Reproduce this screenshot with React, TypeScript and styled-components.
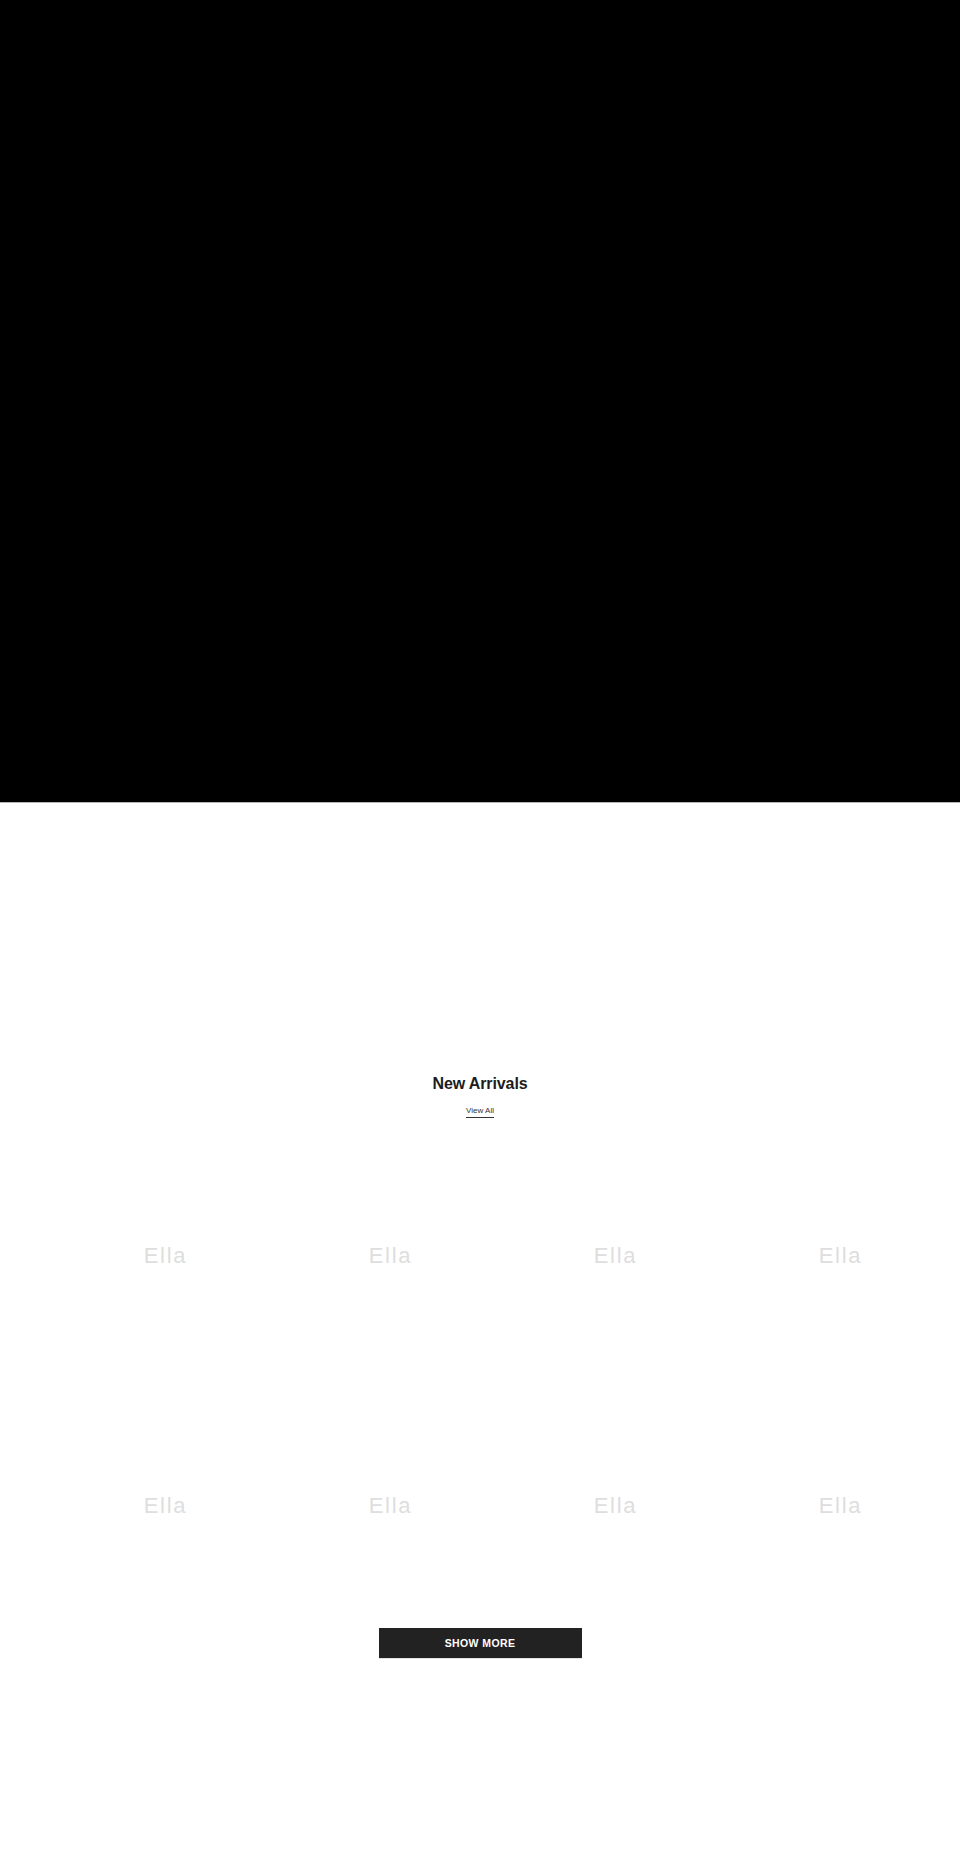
import React from 'react'
import styled, { createGlobalStyle } from 'styled-components'

const GlobalStyle = createGlobalStyle`
  html, body {
    margin: 0;
    padding: 0;
    background: #fff;
  }
  body {
    font-family: "Liberation Sans", Arial, Helvetica, sans-serif;
    color: #1a1a1a;
  }
  * {
    box-sizing: border-box;
  }
`

const products = Array.from({ length: 8 }, (_, i) => ({ id: i, brand: 'Ella' }))

const App = () => {
  return (
    <>
      <GlobalStyle />
      <Page>
        <Hero />
        <Collection>
          <Heading>
            <Title>New Arrivals</Title>
            <ViewAll href='#'>View All</ViewAll>
          </Heading>
          <Grid>
            {products.map(p => (
              <Card key={p.id}>
                <Placeholder>{p.brand}</Placeholder>
              </Card>
            ))}
          </Grid>
          <Actions>
            <ShowMore type='button'>SHOW MORE</ShowMore>
          </Actions>
        </Collection>
      </Page>
    </>
  )
}

export default App

const Page = styled.div`
  width: 100%;
  min-height: 1875px;
  background: #fff;
`

const Hero = styled.div`
  height: 803px;
  background: #000;
  border-bottom: 1px solid #b5b5b5;
`

const Collection = styled.section`
  padding-top: 271px;
`

const Heading = styled.div`
  display: flex;
  flex-direction: column;
  align-items: center;
`

const Title = styled.h2`
  margin: 0;
  font-size: 16px;
  line-height: 20px;
  font-weight: 700;
  letter-spacing: -0.1px;
  color: #1c1c1c;
`

const ViewAll = styled.a`
  margin-top: 12px;
  font-size: 8px;
  line-height: 10px;
  padding-bottom: 1px;
  color: #333;
  text-decoration: none;
  border-bottom: 1px solid #333;
`

const Grid = styled.div`
  margin-top: 3px;
  display: grid;
  grid-template-columns: repeat(4, 225px);
  grid-auto-rows: 250px;
  padding: 0 8px 0 53px;
`

const Card = styled.div`
  display: flex;
  justify-content: center;
  padding-top: 122px;
`

const Placeholder = styled.span`
  font-size: 22px;
  line-height: 26px;
  letter-spacing: 1.7px;
  color: #dedede;
`

const Actions = styled.div`
  display: flex;
  justify-content: center;
  margin-top: 7px;
`

const ShowMore = styled.button`
  width: 203px;
  height: 30px;
  border: none;
  background: #222;
  color: #fff;
  font-family: inherit;
  font-size: 10.5px;
  font-weight: 700;
  letter-spacing: 0.4px;
  cursor: pointer;
  box-shadow: 0 1px 0 #e2e2e2;
`
